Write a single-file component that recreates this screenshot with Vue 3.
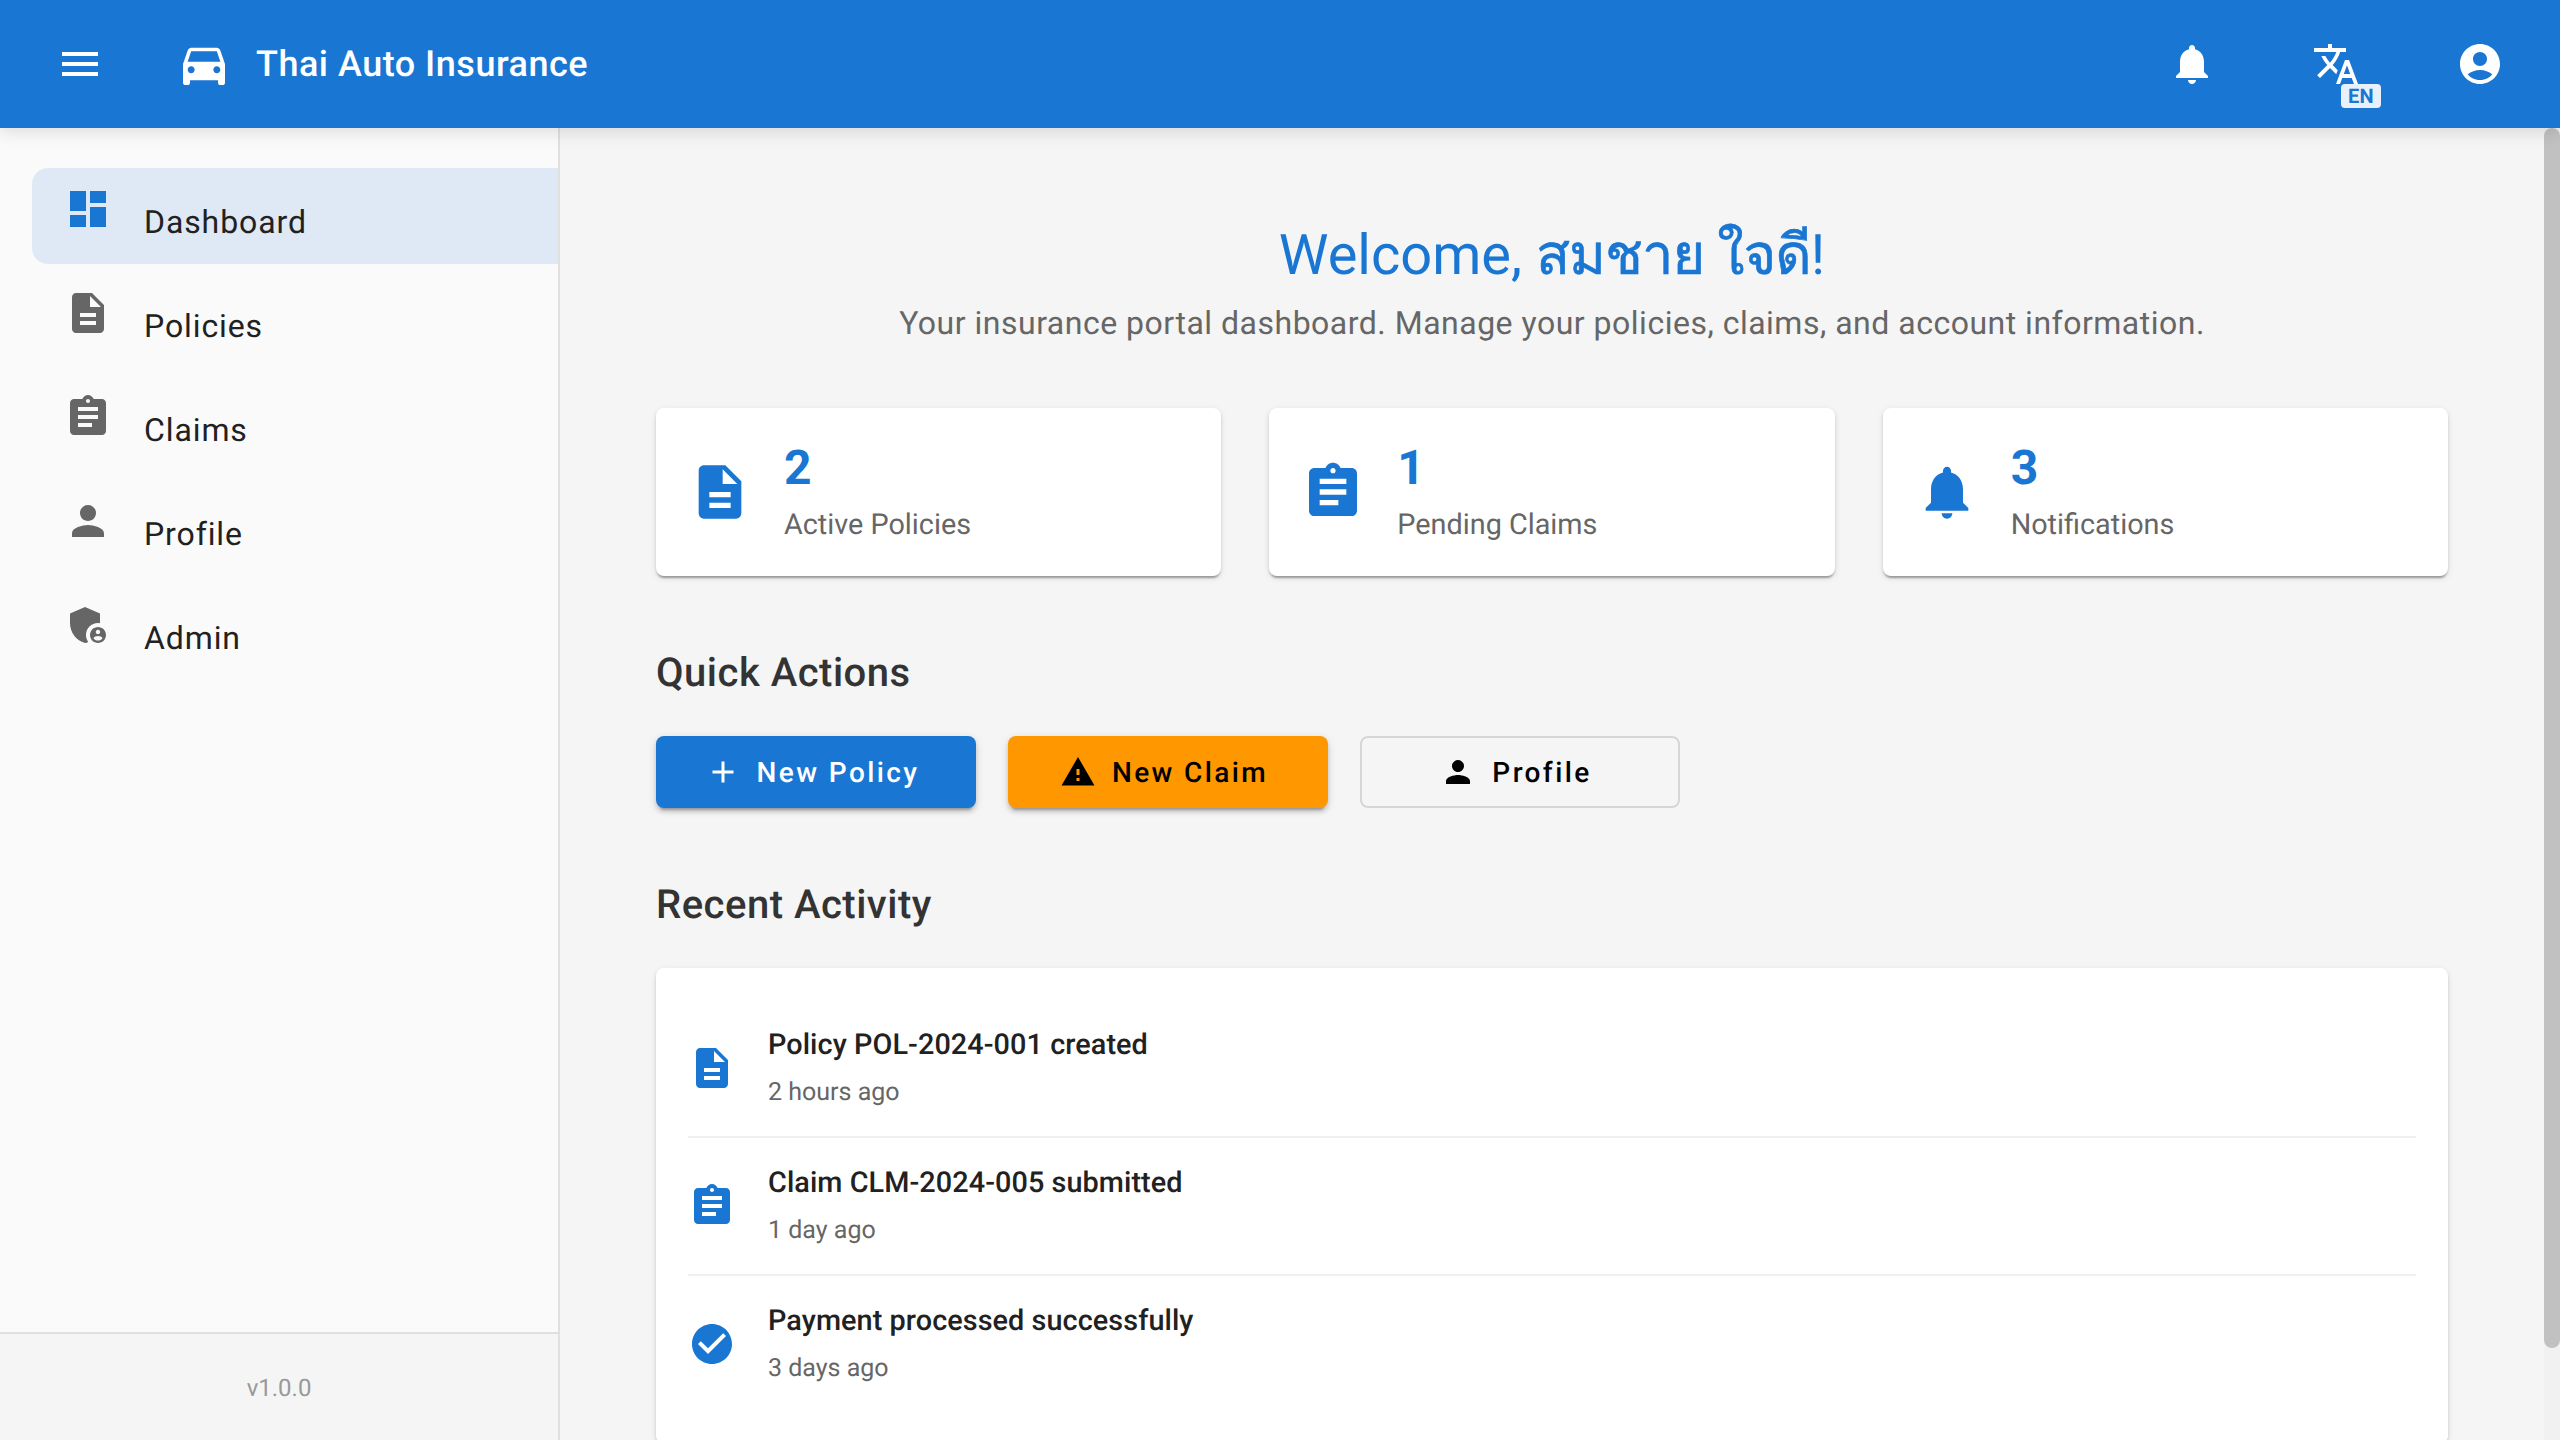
<script setup>
const P = {
  menu: 'M3 18h18v-2H3v2zm0-5h18v-2H3v2zm0-7v2h18V6H3z',
  car: 'M18.92 6.01C18.72 5.42 18.16 5 17.5 5h-11c-.66 0-1.21.42-1.42 1.01L3 12v8c0 .55.45 1 1 1h1c.55 0 1-.45 1-1v-1h12v1c0 .55.45 1 1 1h1c.55 0 1-.45 1-1v-8l-2.08-5.99zM6.5 16c-.83 0-1.5-.67-1.5-1.5S5.67 13 6.5 13s1.5.67 1.5 1.5S7.33 16 6.5 16zm11 0c-.83 0-1.5-.67-1.5-1.5s.67-1.5 1.5-1.5 1.5.67 1.5 1.5-.67 1.5-1.5 1.5zM5 11l1.5-4.5h11L19 11H5z',
  bell: 'M12 22c1.1 0 2-.9 2-2h-4c0 1.1.89 2 2 2zm6-6v-5c0-3.07-1.64-5.64-4.5-6.32V4c0-.83-.67-1.5-1.5-1.5s-1.5.67-1.5 1.5v.68C7.63 5.36 6 7.92 6 11v5l-2 2v1h16v-1l-2-2z',
  translate: 'M12.87 15.07l-2.54-2.51.03-.03c1.74-1.94 2.98-4.17 3.71-6.53H17V4h-7V2H8v2H1v2h11.17C11.5 7.92 10.44 9.75 9 11.35 8.07 10.32 7.3 9.19 6.69 8h-2c.73 1.63 1.73 3.17 2.98 4.56l-5.09 5.02L4 19l5-5 3.11 3.11.76-2.04zM18.5 10h-2L12 22h2l1.12-3h4.75L21 22h2l-4.5-12zm-2.62 7l1.62-4.33L19.12 17h-3.24z',
  account: 'M12 2C6.48 2 2 6.48 2 12s4.48 10 10 10 10-4.48 10-10S17.52 2 12 2zm0 4c1.93 0 3.5 1.57 3.5 3.5S13.93 13 12 13s-3.5-1.57-3.5-3.5S10.07 6 12 6zm0 14c-2.03 0-4.43-.82-6.14-2.88C7.55 15.8 9.68 15 12 15s4.45.8 6.14 2.12C16.43 19.18 14.03 20 12 20z',
  dashboard: 'M3 13h8V3H3v10zm0 8h8v-6H3v6zm10 0h8V11h-8v10zm0-18v6h8V3h-8z',
  description: 'M14 2H6c-1.1 0-1.99.9-1.99 2L4 20c0 1.1.89 2 1.99 2H18c1.1 0 2-.9 2-2V8l-6-6zm2 16H8v-2h8v2zm0-4H8v-2h8v2zm-3-5V3.5L18.5 9H13z',
  assignment: 'M19 3h-4.18C14.4 1.84 13.3 1 12 1c-1.3 0-2.4.84-2.82 2H5c-1.1 0-2 .9-2 2v14c0 1.1.9 2 2 2h14c1.1 0 2-.9 2-2V5c0-1.1-.9-2-2-2zm-7 0c.55 0 1 .45 1 1s-.45 1-1 1-1-.45-1-1 .45-1 1-1zm2 14H7v-2h7v2zm3-4H7v-2h10v2zm0-4H7V7h10v2z',
  person: 'M12 12c2.21 0 4-1.79 4-4s-1.79-4-4-4-4 1.79-4 4 1.79 4 4 4zm0 2c-2.67 0-8 1.34-8 4v2h16v-2c0-2.66-5.33-4-8-4z',
  admin: 'M17 11c.34 0 .67.04 1 .09V6.27L10.5 3 3 6.27v4.91c0 4.54 3.2 8.79 7.5 9.82.55-.13 1.08-.32 1.6-.55-.69-.98-1.1-2.17-1.1-3.45 0-3.31 2.69-6 6-6zM17 13c-2.21 0-4 1.79-4 4s1.79 4 4 4 4-1.79 4-4-1.79-4-4-4zm0 1.38c.62 0 1.12.51 1.12 1.12s-.51 1.12-1.12 1.12-1.12-.51-1.12-1.12.5-1.12 1.12-1.12zm0 5.37c-.93 0-1.74-.46-2.24-1.17.05-.72 1.51-1.08 2.24-1.08s2.19.36 2.24 1.08c-.5.71-1.31 1.17-2.24 1.17z',
  add: 'M19 13h-6v6h-2v-6H5v-2h6V5h2v6h6v2z',
  warning: 'M1 21h22L12 2 1 21zm12-3h-2v-2h2v2zm0-4h-2v-4h2v4z',
  check: 'M12 2C6.48 2 2 6.48 2 12s4.48 10 10 10 10-4.48 10-10S17.52 2 12 2zm-2 15l-5-5 1.41-1.41L10 14.17l7.59-7.59L19 8l-9 9z',
}
const nav = [
  { label: 'Dashboard', icon: P.dashboard, active: true },
  { label: 'Policies', icon: P.description },
  { label: 'Claims', icon: P.assignment },
  { label: 'Profile', icon: P.person },
  { label: 'Admin', icon: P.admin },
]
const stats = [
  { value: '2', label: 'Active Policies', icon: P.description },
  { value: '1', label: 'Pending Claims', icon: P.assignment },
  { value: '3', label: 'Notifications', icon: P.bell },
]
const actions = [
  { label: 'New Policy', icon: P.add, kind: 'primary' },
  { label: 'New Claim', icon: P.warning, kind: 'warn' },
  { label: 'Profile', icon: P.person, kind: 'outline' },
]
const activity = [
  { title: 'Policy POL-2024-001 created', time: '2 hours ago', icon: P.description },
  { title: 'Claim CLM-2024-005 submitted', time: '1 day ago', icon: P.assignment },
  { title: 'Payment processed successfully', time: '3 days ago', icon: P.check },
]
</script>

<template>
  <div class="app">
    <header class="topbar">
      <button class="icon-btn menu"><svg class="i48" viewBox="0 0 24 24"><path :d="P.menu" /></svg></button>
      <svg class="i56 car" viewBox="0 0 24 24"><path :d="P.car" /></svg>
      <div class="brand">Thai Auto Insurance</div>
      <div class="top-actions">
        <button class="icon-btn"><svg class="i48" viewBox="0 0 24 24"><path :d="P.bell" /></svg></button>
        <button class="icon-btn lang">
          <svg class="i48" viewBox="0 0 24 24"><path :d="P.translate" /></svg>
          <span class="badge">EN</span>
        </button>
        <button class="icon-btn"><svg class="i48" viewBox="0 0 24 24"><path :d="P.account" /></svg></button>
      </div>
    </header>
    <div class="body">
      <aside class="sidebar">
        <nav class="nav">
          <div v-for="n in nav" :key="n.label" class="nav-item" :class="{ active: n.active }">
            <svg class="i48 nav-icon" viewBox="0 0 24 24"><path :d="n.icon" /></svg>
            <span class="nav-text">{{ n.label }}</span>
          </div>
        </nav>
        <div class="side-foot">v1.0.0</div>
      </aside>
      <main class="main">
        <section class="hero">
          <h1>Welcome, <span class="thai">สมชาย ใจดี</span>!</h1>
          <p>Your insurance portal dashboard. Manage your policies, claims, and account information.</p>
        </section>
        <section class="stats">
          <div v-for="s in stats" :key="s.label" class="stat">
            <svg class="i64" viewBox="0 0 24 24"><path :d="s.icon" /></svg>
            <div>
              <div class="stat-value">{{ s.value }}</div>
              <div class="stat-label">{{ s.label }}</div>
            </div>
          </div>
        </section>
        <h2>Quick Actions</h2>
        <section class="actions">
          <button v-for="a in actions" :key="a.label" class="act" :class="a.kind">
            <svg class="i36" viewBox="0 0 24 24"><path :d="a.icon" /></svg>
            <span>{{ a.label }}</span>
          </button>
        </section>
        <h2>Recent Activity</h2>
        <section class="recent">
          <div v-for="r in activity" :key="r.title" class="row">
            <svg class="i48 row-icon" viewBox="0 0 24 24"><path :d="r.icon" /></svg>
            <div class="row-body">
              <div class="row-title">{{ r.title }}</div>
              <div class="row-time">{{ r.time }}</div>
            </div>
          </div>
        </section>
      </main>
      <div class="scrollbar"><div class="thumb"></div></div>
    </div>
  </div>
</template>

<style>
html, body { margin: 0; height: 100%; overflow: hidden; }
</style>

<style scoped>
.app {
  display: flex;
  flex-direction: column;
  height: 100vh;
  font-family: Roboto, "Noto Sans", sans-serif;
  color: #212121;
  text-rendering: geometricPrecision;
}
svg { fill: currentColor; display: block; flex: none; }
.i36 { width: 36px; height: 36px; }
.i48 { width: 48px; height: 48px; }
.i56 { width: 56px; height: 56px; }
.i64 { width: 64px; height: 64px; }
button { font-family: inherit; border: 0; background: none; padding: 0; color: inherit; text-rendering: geometricPrecision; }

.topbar {
  position: relative;
  z-index: 2;
  display: flex;
  align-items: center;
  height: 128px;
  flex: none;
  background: #1976d2;
  color: #fff;
  box-shadow: 0 4px 16px rgba(0, 0, 0, 0.12);
}
.icon-btn { display: flex; position: relative; }
.menu { margin-left: 56px; }
.car { margin-left: 72px; }
.brand { margin-left: 24px; margin-top: 2px; font-size: 36px; font-weight: 500; line-height: 1.6; letter-spacing: 0.5px; }
.top-actions { margin-left: auto; margin-right: 56px; display: flex; gap: 96px; }
.badge {
  position: absolute;
  left: 29px;
  top: 44px;
  width: 40px;
  height: 24px;
  border-radius: 4px;
  background: rgba(255, 255, 255, 0.9);
  color: #1976d2;
  font-size: 20px;
  font-weight: 700;
  letter-spacing: 0.4px;
  line-height: 25px;
  text-align: center;
}

.body { flex: 1; display: flex; min-height: 0; }
.sidebar {
  width: 560px;
  box-sizing: border-box;
  flex: none;
  display: flex;
  flex-direction: column;
  background: #fafafa;
  border-right: 2px solid #e0e0e0;
}
.nav { flex: 1; padding-top: 40px; display: flex; flex-direction: column; gap: 8px; }
.nav-item {
  height: 96px;
  margin-left: 32px;
  padding: 17px 0 0 32px;
  box-sizing: border-box;
  display: flex;
  align-items: flex-start;
  gap: 32px;
  border-radius: 16px 0 0 16px;
}
.nav-item.active { background: rgba(25, 118, 210, 0.12); }
.nav-icon { color: #666; }
.active .nav-icon { color: #1976d2; }
.nav-text { font-size: 32px; line-height: 48px; margin-top: 13px; letter-spacing: 0.9px; }
.side-foot {
  height: 108px;
  box-sizing: border-box;
  border-top: 2px solid #e0e0e0;
  background: #f5f5f5;
  color: #999;
  font-size: 24px;
  line-height: 108px;
  text-align: center;
}

.main {
  flex: 1;
  min-width: 0;
  overflow: hidden;
  box-sizing: border-box;
  padding: 80px 96px 96px;
  background: #f5f5f5;
}
.scrollbar { width: 16px; flex: none; background: #f1f1f1; }
.thumb { height: 1220px; background: #c1c1c1; border-radius: 8px; }

.hero { text-align: center; margin-bottom: 61px; }
.hero h1 { margin: 5px 0 2px; font-size: 56px; font-weight: 400; line-height: 84px; color: #1976d2; }
.thai { font-weight: 500; letter-spacing: -1px; -webkit-text-stroke: 0.6px #1976d2; }
.hero p { margin: 0; font-size: 32px; line-height: 48px; color: #666; letter-spacing: 0.5px; }

.stats { display: grid; grid-template-columns: repeat(3, 1fr); gap: 48px; margin-bottom: 64px; }
.stat {
  height: 168px;
  box-sizing: border-box;
  padding: 0 32px;
  display: flex;
  align-items: center;
  gap: 32px;
  background: #fff;
  border-radius: 8px;
  color: #1976d2;
  box-shadow: 0 4px 2px -2px rgba(0, 0, 0, 0.2), 0 2px 2px rgba(0, 0, 0, 0.14), 0 2px 6px rgba(0, 0, 0, 0.12);
}
.stat-value { font-size: 48px; font-weight: 700; line-height: 56px; margin-top: 3px; }
.stat-label { font-size: 28.8px; line-height: 44px; margin-top: 7px; color: #666; }

h2 { margin: 0 0 32px; font-size: 40px; font-weight: 500; line-height: 64px; color: #333; padding-top: 1px; height: 63px; letter-spacing: 0.5px; }

.actions { display: flex; gap: 32px; margin-bottom: 64px; }
.act {
  width: 320px;
  height: 72px;
  box-sizing: border-box;
  display: flex;
  align-items: center;
  justify-content: center;
  gap: 16px;
  border-radius: 8px;
  font-size: 28px;
  font-weight: 500;
  letter-spacing: 2.4px;
}
.act svg { margin-left: -8px; }
.primary { background: #1976d2; color: #fff; box-shadow: 0 6px 2px -4px rgba(0,0,0,.2), 0 4px 4px rgba(0,0,0,.14), 0 2px 10px rgba(0,0,0,.12); }
.warn { background: #ff9800; color: #000; box-shadow: 0 6px 2px -4px rgba(0,0,0,.2), 0 4px 4px rgba(0,0,0,.14), 0 2px 10px rgba(0,0,0,.12); }
.outline { border: 2px solid #d6d6d6; color: #000; }

.recent {
  padding: 32px;
  background: #fff;
  border-radius: 8px;
  box-shadow: 0 4px 2px -2px rgba(0, 0, 0, 0.2), 0 2px 2px rgba(0, 0, 0, 0.14), 0 2px 6px rgba(0, 0, 0, 0.12);
}
.row {
  height: 138px;
  box-sizing: border-box;
  display: flex;
  align-items: center;
  gap: 32px;
  border-bottom: 2px solid #f0f0f0;
}
.row:last-child { border-bottom: 0; height: 136px; }
.row-icon { color: #1976d2; }
.row-body { padding-top: 2px; }
.row-title { font-size: 28.8px; font-weight: 500; line-height: 44px; color: #212121; letter-spacing: 0.08px; }
.row-time { font-size: 25px; line-height: 44px; margin-top: 4px; color: #666; }
</style>
